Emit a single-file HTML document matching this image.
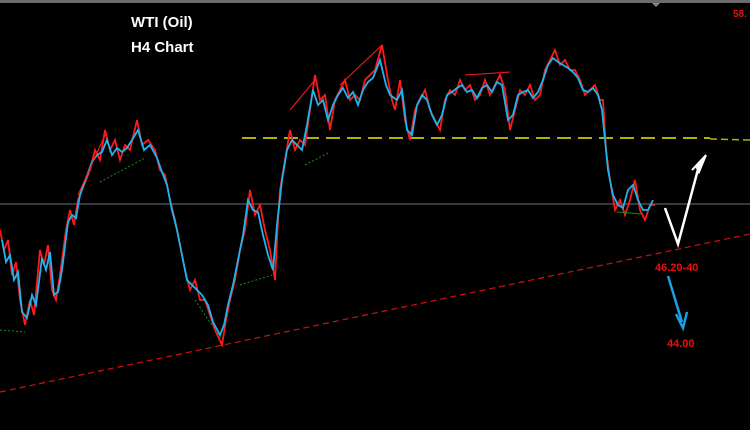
<!DOCTYPE html>
<html><head><meta charset="utf-8"><style>
html,body{margin:0;padding:0;background:#000;width:750px;height:430px;overflow:hidden}
svg{display:block}
text{font-family:"Liberation Sans",sans-serif;font-weight:bold}
</style></head><body>
<svg width="750" height="430" viewBox="0 0 750 430">
<rect width="750" height="430" fill="#000"/>
<rect x="0" y="0" width="750" height="3" fill="#6b6b6b"/>
<polygon points="652,3 660,3 656,7" fill="#888"/>
<line x1="0" y1="204" x2="750" y2="204" stroke="#6b7580" stroke-width="1"/>
<line x1="242" y1="138" x2="710" y2="138" stroke="#b5b000" stroke-width="2" stroke-dasharray="14,7"/>
<line x1="710" y1="139" x2="750" y2="140" stroke="#b5b000" stroke-width="1.5" stroke-dasharray="7,4"/>
<line x1="0" y1="392" x2="750" y2="234" stroke="#d01010" stroke-width="1.2" stroke-dasharray="6,4"/>
<g fill="none" stroke-width="1.8">
<polyline stroke="#ff1a1a" points="0,230 4,250 8,240 12,275 16,262 20,300 25,325 30,300 34,315 40,250 44,265 48,245 52,290 56,300 60,275 66,230 70,210 74,225 78,200 84,185 90,170 95,150 100,160 105,130 110,150 115,140 120,160 125,145 130,150 137,120 142,145 148,140 155,150 160,170 165,175 170,200 175,220 180,245 185,270 190,290 195,280 200,300 205,300 210,315 215,330 222,345 226,320 230,300 235,280 240,250 245,230 250,190 255,215 260,205 265,230 270,250 275,280 278,220 280,190 285,160 290,130 295,150 300,140 305,145 310,110 315,75 320,100 325,95 330,130 335,100 340,90 345,80 350,100 355,95 360,100 365,80 370,75 375,70 382,45 388,80 392,100 395,110 400,80 405,120 410,140 415,110 420,100 425,90 430,110 435,120 440,130 445,100 450,90 455,95 460,80 465,90 470,85 475,100 480,95 485,80 490,95 495,85 500,75 505,90 510,130 515,110 520,90 525,95 530,85 535,100 540,95 545,70 550,60 555,50 560,65 565,60 570,70 575,70 580,80 585,95 590,90 595,85 600,100 603,100 606,150 610,180 615,210 620,200 625,215 630,200 635,180 640,210 645,220 650,205 655,205"/>
<polyline stroke="#1eb4f0" points="2,240 6,262 10,255 14,280 18,272 22,312 27,318 32,295 36,305 42,258 46,270 50,252 54,295 58,292 62,270 68,222 72,215 76,218 80,195 86,178 92,162 97,155 102,152 107,140 112,155 117,148 122,152 127,148 132,140 138,130 144,150 150,145 157,158 162,172 167,185 172,210 177,230 182,255 187,280 192,285 197,290 202,295 208,305 213,322 220,335 224,325 228,305 233,285 238,260 243,235 248,200 253,210 258,212 263,235 268,255 273,270 277,225 282,180 287,150 292,140 297,145 302,150 307,125 313,90 318,105 323,100 328,120 333,105 338,95 343,88 348,98 353,92 358,105 363,90 368,82 373,78 380,60 386,85 390,95 397,100 402,90 407,130 412,135 417,105 422,95 427,100 432,115 437,125 442,115 447,95 452,92 457,88 462,85 467,92 472,90 477,98 482,88 487,85 492,92 497,82 502,85 508,120 513,115 518,95 523,92 528,90 533,98 538,92 543,80 548,65 553,58 558,62 563,65 568,68 573,72 578,78 583,90 588,92 593,88 598,95 602,110 608,170 613,195 618,205 623,208 628,190 633,185 638,200 643,210 648,210 653,200"/>
</g>
<g stroke="#ff1a1a" stroke-width="1" fill="none">
<line x1="290" y1="110" x2="315" y2="80"/><line x1="340" y1="85" x2="382" y2="45"/><line x1="465" y1="75" x2="510" y2="72"/>
<line x1="78" y1="195" x2="105" y2="135"/>
</g>
<g stroke="#1a8a1a" stroke-width="1" fill="none" stroke-dasharray="2,2">
<line x1="100" y1="182" x2="145" y2="158"/><line x1="305" y1="165" x2="330" y2="152"/>
<line x1="0" y1="330" x2="25" y2="332"/><line x1="195" y1="300" x2="222" y2="340"/>
<line x1="240" y1="285" x2="272" y2="275"/>
<line x1="617" y1="212" x2="642" y2="214" stroke-dasharray="none"/>
</g>
<polyline points="665,208 678,244 700,162" fill="none" stroke="#fff" stroke-width="2.5"/>
<polygon points="706,155 699,172 696,166 692,170" fill="#fff" stroke="#fff" stroke-width="2"/>
<line x1="668" y1="276" x2="682" y2="322" stroke="#1aa0e8" stroke-width="2.5"/>
<polyline points="676,314 683,328 687,312" fill="none" stroke="#1aa0e8" stroke-width="2.5"/>
<text x="131" y="27" fill="#fff" font-size="15">WTI (Oil)</text>
<text x="131" y="52" fill="#fff" font-size="15">H4 Chart</text>
<text x="655" y="271" fill="#e81010" font-size="11">46.20-40</text>
<text x="667" y="347" fill="#e81010" font-size="11">44.00</text>
<text x="733" y="17" fill="#e81010" font-size="10">58.</text>
</svg>
</body></html>
